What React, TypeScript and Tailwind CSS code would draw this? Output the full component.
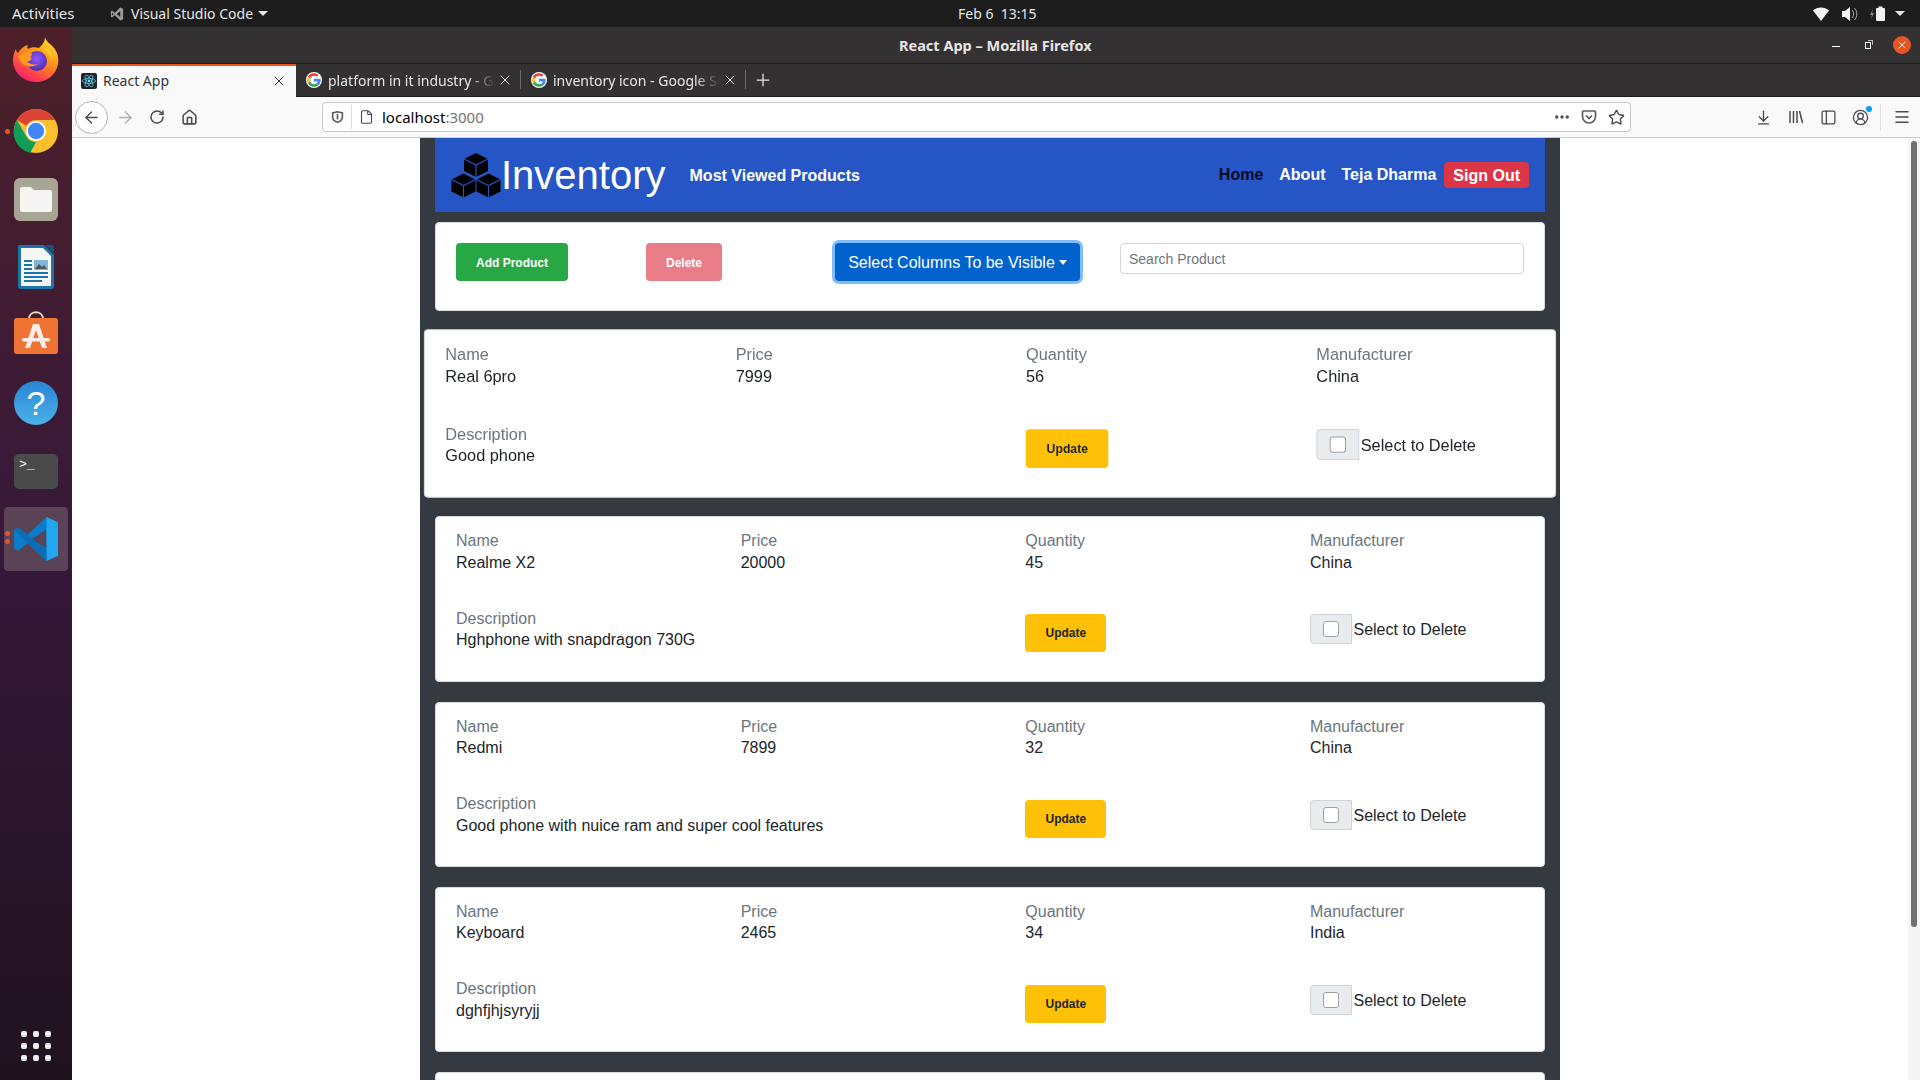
import React from 'react';
import { ArrowLeft, ArrowRight, RotateCw, House, Ellipsis, Star, ArrowDownToLine, PanelLeft, CircleUserRound, Menu, File, X, Plus } from 'lucide-react';

type Product = {
  name: string;
  price: string;
  quantity: string;
  manufacturer: string;
  description: string;
};

const products: Product[] = [
  { name: 'Real 6pro', price: '7999', quantity: '56', manufacturer: 'China', description: 'Good phone' },
  { name: 'Realme X2', price: '20000', quantity: '45', manufacturer: 'China', description: 'Hghphone with snapdragon 730G' },
  { name: 'Redmi', price: '7899', quantity: '32', manufacturer: 'China', description: 'Good phone with nuice ram and super cool features' },
  { name: 'Keyboard', price: '2465', quantity: '34', manufacturer: 'India', description: 'dghfjhjsyryjj' },
];

const GoogleIcon = () => (
  <svg viewBox="0 0 48 48" className="w-[16px] h-[16px] shrink-0 rounded-full bg-white p-[1px]">
    <path fill="#EA4335" d="M24 9.5c3.5 0 6.7 1.3 9.1 3.5l6.8-6.8C35.8 2.4 30.3 0 24 0 14.6 0 6.5 5.4 2.6 13.2l7.9 6.2C12.4 13.7 17.7 9.5 24 9.5z" />
    <path fill="#4285F4" d="M46.9 24.5c0-1.6-.1-3.100-.4-4.500H24v9h12.900c-.6 3-2.200 5.500-4.800 7.200l7.600 5.900c4.500-4.100 7.200-10.200 7.200-17.600z" />
    <path fill="#FBBC05" d="M10.500 28.600c-.5-1.400-.8-3-.8-4.600s.3-3.200.8-4.600l-7.900-6.200C.9 16.500 0 20.100 0 24s.9 7.500 2.600 10.800l7.900-6.200z" />
    <path fill="#34A853" d="M24 48c6.500 0 11.900-2.100 15.800-5.800l-7.600-5.900c-2.100 1.400-4.900 2.300-8.200 2.300-6.300 0-11.600-4.200-13.500-9.900l-7.900 6.200C6.500 42.600 14.600 48 24 48z" />
  </svg>
);

const ReactIcon = () => (
  <svg viewBox="0 0 16 16" className="w-[16px] h-[16px] shrink-0 rounded-[2px] bg-[#20232a]">
    <circle cx="8" cy="8" r="1.400" fill="#61dafb" />
    <g fill="none" stroke="#61dafb" strokeWidth="0.700">
      <ellipse cx="8" cy="8" rx="6.500" ry="2.600" />
      <ellipse cx="8" cy="8" rx="6.500" ry="2.600" transform="rotate(60 8 8)" />
      <ellipse cx="8" cy="8" rx="6.500" ry="2.600" transform="rotate(120 8 8)" />
    </g>
  </svg>
);

const VsCodeGlyph = ({ className }: { className?: string }) => (
  <svg viewBox="0 0 24 24" className={className} fill="currentColor">
    <path d="M17.500 1 8.200 9.800 3.500 6.200 1.500 7.200v9.600l2 1 4.700-3.600 9.300 8.800 5-2.200V3.200zM3.500 14.500v-5L6 12zM17.500 16.600 11.400 12l6.100-4.600z" />
  </svg>
);

const FirefoxIcon = () => (
  <svg viewBox="0 0 48 48" className="w-[48px] h-[48px]">
    <defs>
      <linearGradient id="ffa" x1="0.800" y1="0" x2="0.200" y2="1">
        <stop offset="0" stopColor="#ffe226" />
        <stop offset="0.450" stopColor="#ff8a1e" />
        <stop offset="0.800" stopColor="#ff3b50" />
        <stop offset="1" stopColor="#e31587" />
      </linearGradient>
      <radialGradient id="ffb" cx="0.500" cy="0.400" r="0.600">
        <stop offset="0" stopColor="#9059ff" />
        <stop offset="1" stopColor="#4a2bb0" />
      </radialGradient>
    </defs>
    <path fill="url(#ffa)" d="M33 1c1 5 6 7 9 11 4 5 5 11 4 16-2 11-11 18-22 18C11 46 1 36 1 24c0-4 1-8 3-11 0 2 1 3 2 4 2-4 6-7 10-8-1 2-1 3 0 4 3-2 7-2 11-1 3-3 6-6 6-11z" />
    <circle cx="25" cy="25" r="10" fill="url(#ffb)" />
    <path fill="#ff9a1f" d="M7 20c3-4 8-5 12-3 2 1 1 3-1 3 3 2 1 5-3 6 3 2 7 3 11 2-5 4-13 3-17-2-2-2-2-4-2-6z" />
    <path fill="#ffc928" d="M33 10c5 4 8 9 7 16-1-5-3-9-7-12z" />
  </svg>
);

const ChromeIcon = () => (
  <svg viewBox="0 0 48 48" className="w-[46px] h-[46px]">
    <circle cx="24" cy="24" r="23" fill="#fbc02d" />
    <path fill="#db4437" d="M24 1a23 23 0 0 1 20 11.500H24a11.500 11.500 0 0 0-10 6L4.100 12.500A23 23 0 0 1 24 1z" />
    <path fill="#0f9d58" d="M4.100 12.500 14 29.700a11.500 11.500 0 0 0 10 5.800L18 47a23 23 0 0 1-13.900-34.500z" />
    <circle cx="24" cy="24" r="10.500" fill="#fff" />
    <circle cx="24" cy="24" r="8.500" fill="#4285f4" />
  </svg>
);

const FilesIcon = () => (
  <div className="w-[44px] h-[43px] rounded-[6px] bg-[#a9a594] flex items-center justify-center">
    <svg viewBox="0 0 32 26" className="w-[32px] h-[26px]">
      <path fill="#f6f5f4" d="M0 3a2 2 0 0 1 2-2h9l3 3h16a2 2 0 0 1 2 2v18a2 2 0 0 1-2 2H2a2 2 0 0 1-2-2z" />
    </svg>
  </div>
);

const WriterIcon = () => (
  <svg viewBox="0 0 36 44" className="w-[36px] h-[44px]">
    <path fill="#1b75a8" d="M2 0h24l10 10v31a3 3 0 0 1-3 3H3a3 3 0 0 1-3-3V2a2 2 0 0 1 2-2z" />
    <path fill="#f6f6f6" d="M3 3h22l8 8v30H3z" />
    <path fill="#18537a" d="M27 0h7a2 2 0 0 1 2 2v7z" />
    <path fill="#1b75a8" d="M6 15h8v2H6zM6 19h8v2H6zM6 23h8v2H6zM6 27h24v2H6zM6 31h24v2H6zM6 35h18v2H6z" />
    <rect x="16" y="15" width="14" height="10" fill="#7fb6d6" />
    <path fill="#555" d="M17 24l4-5 3 3 2-2 3 4z" />
  </svg>
);

const StoreIcon = () => (
  <div className="relative w-[44px] h-[44px]">
    <svg viewBox="0 0 44 44" className="w-[44px] h-[44px]">
      <path fill="none" stroke="#e8d5b8" strokeWidth="2" d="M15 9c0-9 14-9 14 0" />
      <path fill="#ef7333" d="M3 8h38a3 3 0 0 1 3 3v30a3 3 0 0 1-3 3H3a3 3 0 0 1-3-3V11a3 3 0 0 1 3-3z" />
      <path fill="#f9efe8" d="M19 14h6l8 24h-5l-6-18-6 18h-5z" />
      <rect x="8" y="28" width="28" height="3.500" rx="1.700" fill="#f9efe8" />
    </svg>
  </div>
);

const HelpIcon = () => (
  <div className="w-[44px] h-[44px] rounded-full bg-gradient-to-b from-[#2a86d6] to-[#4bb0e8] flex items-center justify-center text-white text-[34px] leading-none">
    ?
  </div>
);

const TerminalIcon = () => (
  <div className="w-[44px] h-[35px] rounded-[5px] bg-[#4a4a4a] text-white text-[13px] leading-none pl-[5px] pt-[4px] font-['Liberation_Mono',monospace]">
    &gt;_
  </div>
);

const VsCodeIcon = () => (
  <svg viewBox="0 0 44 44" className="w-[46px] h-[46px]">
    <path fill="#0a7cc9" d="M32 1 14 18 5 11 1 13v18l4 2 9-7 18 17 11-5V6zM32 31 18 22 32 13z" />
    <path fill="#22a6f2" d="M32 1l11 5v32l-11 5z" />
    <path fill="#0a6db5" d="M1 13l4-2 27 21v11L5 17z" />
  </svg>
);

const Dot = () => <span className="block w-[5px] h-[5px] rounded-full bg-[#e95420]" />;

const Sidebar = () => (
  <aside className="w-[72px] shrink-0 h-full bg-gradient-to-b from-[#4d1f28] via-[#36183a] to-[#1f121d] flex flex-col items-center">
    <div className="h-[70px] pb-[4px] flex items-center justify-center"><FirefoxIcon /></div>
    <div className="relative h-[68px] w-full flex items-center justify-center">
      <span className="absolute left-[5px] top-[32px]"><Dot /></span>
      <ChromeIcon />
    </div>
    <div className="h-[68px] flex items-center justify-center"><FilesIcon /></div>
    <div className="h-[68px] flex items-center justify-center"><WriterIcon /></div>
    <div className="h-[68px] pb-[7px] flex items-center justify-center"><StoreIcon /></div>
    <div className="h-[68px] flex items-center justify-center"><HelpIcon /></div>
    <div className="h-[68px] flex items-center justify-center"><TerminalIcon /></div>
    <div className="relative mt-[2px] w-[64px] h-[64px] rounded-[4px] bg-[#5a4356] flex items-center justify-center">
      <span className="absolute left-[1px] top-[24px] flex flex-col gap-[3px]"><Dot /><Dot /></span>
      <VsCodeIcon />
    </div>
    <div className="mt-auto mb-[19px] grid grid-cols-3 gap-x-[6px] gap-y-[6px]">
      {Array.from({ length: 9 }).map((_, i) => (
        <span key={i} className="block w-[6px] h-[6px] rounded-[2px] bg-[#eeeeee]" />
      ))}
    </div>
  </aside>
);

const TopBar = () => (
  <div className="h-[27px] shrink-0 bg-[#1d1d1d] text-[#e6e6e6] text-[14px] flex items-center font-['Noto_Sans',sans-serif]">
    <span className="ml-[12px] w-[98px] text-[15px]">Activities</span>
    <VsCodeGlyph className="w-[14px] h-[14px] text-[#9a9a9a] mr-[7px]" />
    <span>Visual Studio Code</span>
    <span className="ml-[5px] border-t-[5px] border-x-[5px] border-x-transparent border-t-[#e6e6e6]" />
    <span className="ml-[690px] whitespace-pre">Feb 6  13:15</span>
    <div className="ml-auto flex items-center mr-[15px]">
      <svg viewBox="0 0 16 14" className="w-[16px] h-[14px]"><path fill="#f2f2f2" d="M0 3.500C4-.5 12-.5 16 3.500L8 14z" /></svg>
      <svg viewBox="0 0 16 14" className="w-[16px] h-[14px] ml-[13px]"><path fill="#f2f2f2" d="M0 4h3l5-4v14l-5-4H0z" /><path fill="none" stroke="#aaa" strokeWidth="1" d="M10 3c2 2 2 6 0 8M12.500 1c3 3 3 9 0 12" /></svg>
      <svg viewBox="0 0 16 16" className="w-[16px] h-[16px] ml-[12px]"><path fill="#888" d="M3 3 0 9h2l-1 4 3-6H2z" /><rect x="6" y="2" width="9" height="13" rx="1" fill="#f2f2f2" /><rect x="8.500" y="0.500" width="4" height="2" fill="#f2f2f2" /></svg>
      <span className="ml-[9px] border-t-[5px] border-x-[5px] border-x-transparent border-t-[#e6e6e6]" />
    </div>
  </div>
);

const TitleBar = () => (
  <div className="h-[37px] shrink-0 bg-[#333132] border-b border-[#1f1e1f] flex items-center text-[#e6e6e6] font-['Noto_Sans',sans-serif]">
    <span className="ml-[827px] pt-[1px] text-[14.500px] font-bold">React App – Mozilla Firefox</span>
    <div className="ml-auto flex items-center">
      <span className="block w-[8px] h-[1px] bg-white mt-[3px]" />
      <span className="relative ml-[25px] block w-[6px] h-[7px] border border-white">
        <span className="absolute -top-[3px] -right-[3px] w-[5px] h-[5px] border-t border-r border-[#bbbbbb]" />
      </span>
      <span className="ml-[22px] mr-[9px] w-[18px] h-[18px] rounded-full bg-[#e95420] flex items-center justify-center">
        <X className="w-[12px] h-[12px] text-white" strokeWidth={2} />
      </span>
    </div>
  </div>
);

const Tab = ({ title }: { title: string }) => (
  <div className="w-[225px] h-full flex items-center pl-[10px] text-[#e6e6e6] relative">
    <GoogleIcon />
    <span className="ml-[6px] w-[167px] overflow-hidden whitespace-nowrap text-[14px] [mask-image:linear-gradient(to_right,black_85%,transparent)]">{title}</span>
    <X className="ml-[2px] w-[16px] h-[16px] shrink-0" strokeWidth={1.500} />
    <span className="absolute right-0 top-[6px] bottom-[7px] w-px bg-[#6a6a6a]" />
  </div>
);

const TabBar = () => (
  <div className="h-[33px] shrink-0 bg-[#333132] border-b border-[#1f1e1f] flex items-stretch font-['Noto_Sans',sans-serif]">
    <div className="w-[224px] h-[33px] bg-[#f9f9fa] border-t-2 border-[#e95420] flex items-center pl-[9px] pb-[2px] text-[#333]">
      <ReactIcon />
      <span className="ml-[6px] text-[14px]">React App</span>
      <X className="ml-auto mr-[9px] w-[16px] h-[16px]" strokeWidth={1.500} />
    </div>
    <Tab title="platform in it industry - Google" />
    <Tab title="inventory icon - Google Search" />
    <div className="flex items-center ml-[7px]">
      <Plus className="w-[20px] h-[20px] text-[#e6e6e6]" strokeWidth={1.500} />
    </div>
  </div>
);

const Toolbar = () => (
  <div className="h-[41px] shrink-0 bg-[#f9f9fa] border-b border-[#cccccc] flex items-center text-[#4a4a4f] font-['Noto_Sans',sans-serif]">
    <span className="ml-[3px] w-[33px] h-[33px] rounded-full bg-white border border-[#b4b4b4] flex items-center justify-center">
      <ArrowLeft className="w-[19px] h-[19px]" strokeWidth={1.800} />
    </span>
    <ArrowRight className="ml-[8px] w-[19px] h-[19px] text-[#b1b1b3]" strokeWidth={1.800} />
    <RotateCw className="ml-[14px] w-[16px] h-[16px]" strokeWidth={2.200} />
    <House className="ml-[16px] w-[17px] h-[17px]" strokeWidth={2.200} />
    <div className="ml-[124px] w-[1309px] h-[30px] rounded-[4px] bg-white border border-[#c8c8c8] flex items-center">
      <svg viewBox="0 0 16 16" className="ml-[8px] w-[13px] h-[14px]" fill="none" stroke="#5b5b66" strokeWidth="2"><path d="M8 1.500 14 3v5c0 3.500-3 5.500-6 6.500C5 13.500 2 11.500 2 8V3z" /><path d="M8 4v7" /></svg>
      <span className="ml-[7px] w-px h-[24px] bg-[#dddddd]" />
      <File className="ml-[7px] w-[15px] h-[16px]" strokeWidth={1.800} />
      <span className="ml-[8px] text-[15px] text-black">localhost<span className="text-[#737373]">:3000</span></span>
      <Ellipsis className="ml-auto w-[18px] h-[18px]" strokeWidth={2.500} />
      <svg viewBox="0 0 16 16" className="ml-[10px] w-[16px] h-[16px]" fill="none" stroke="#5b5b66" strokeWidth="1.700"><path d="M2.500 2h11a1 1 0 0 1 1 1v4.500a6.500 6.500 0 0 1-13 0V3a1 1 0 0 1 1-1z" /><path d="M5 6.500 8 9.500l3-3" /></svg>
      <Star className="ml-[11px] mr-[5px] w-[17px] h-[17px]" strokeWidth={2} />
    </div>
    <ArrowDownToLine className="ml-[124px] w-[17px] h-[17px]" strokeWidth={1.800} />
    <svg viewBox="0 0 16 16" className="ml-[16px] w-[16px] h-[16px]" fill="none" stroke="#4a4a4f" strokeWidth="1.500"><path d="M2 2v12M5.500 2v12M9 2v12M11.500 2l3 12" /></svg>
    <PanelLeft className="ml-[16px] w-[17px] h-[17px]" strokeWidth={1.800} />
    <span className="relative ml-[15px]">
      <CircleUserRound className="w-[17px] h-[17px]" strokeWidth={1.800} />
      <span className="absolute -top-[3px] -right-[3px] w-[6px] h-[6px] rounded-full bg-[#0a9dff]" />
    </span>
    <span className="ml-[11px] w-px h-[27px] bg-[#dddddd]" />
    <Menu className="ml-[12px] w-[18px] h-[18px]" strokeWidth={2} />
  </div>
);

const Field = ({ label, value }: { label: string; value: string }) => (
  <div className="leading-[21.5px]">
    <div className="text-[#6c757d]">{label}</div>
    <div className="text-[#212529]">{value}</div>
  </div>
);

const ProductCard = ({ product, hovered }: { product: Product; hovered?: boolean }) => (
  <div
    className={`h-[165.33px] shrink-0 bg-white border border-[#d9d9d9] rounded-[4px] pl-[20px] pt-[13px] ${
      hovered ? 'scale-[1.02]' : ''
    }`}
  >
    <div className="grid grid-cols-[284.67px_284.67px_284.67px_1fr] gap-y-[34.5px]">
      <Field label="Name" value={product.name} />
      <Field label="Price" value={product.price} />
      <Field label="Quantity" value={product.quantity} />
      <Field label="Manufacturer" value={product.manufacturer} />
      <div className="col-span-2">
        <Field label="Description" value={product.description} />
      </div>
      <div className="pt-[6.5px]">
        <button className="w-[81px] h-[38px] rounded-[4px] bg-[#ffc107] text-[#212529] text-[12px] font-bold">Update</button>
      </div>
      <div className="pt-[6.5px] flex items-start">
        <span className="w-[42px] h-[30px] rounded-l-[4px] bg-[#e9ecef] border border-[#ced4da] flex items-center justify-center">
          <input type="checkbox" className="appearance-none w-[16px] h-[16px] rounded-[3px] bg-white border border-[#a0a0a0]" />
        </span>
        <span className="ml-[1.5px] leading-[31px] text-[#212529]">Select to Delete</span>
      </div>
    </div>
  </div>
);

const Navbar = () => (
  <nav className="h-[74px] shrink-0 bg-[#2655c5] flex items-center text-white">
    <svg viewBox="0 0 50 45" className="ml-[16px] w-[50px] h-[45px] shrink-0">
      {[
        [25, 12],
        [12.500, 32.500],
        [37.500, 32.500],
      ].map(([x, y], i) => (
        <g key={i} transform={`translate(${x} ${y})`}>
          <path d="M0-12 12-6V6L0 12-12 6V-6z" fill="#000" />
          <path d="M-12-6 0 0 12-6M0 0V12" fill="none" stroke="#2655c5" strokeWidth="1.200" />
        </g>
      ))}
    </svg>
    <span className="text-[40px] leading-none">Inventory</span>
    <span className="ml-[24px] pt-[1px] font-bold">Most Viewed Products</span>
    <div className="ml-auto flex items-center font-bold">
      <span className="text-[#050a24]">Home</span>
      <span className="ml-[16px]">About</span>
      <span className="ml-[16px]">Teja Dharma</span>
      <span className="ml-[8px] mr-[16px] h-[26px] rounded-[4px] bg-[#dc3545] px-[9px] leading-[27px]">Sign Out</span>
    </div>
  </nav>
);

const ActionsCard = () => (
  <div className="h-[89px] mt-[10px] shrink-0 bg-white border border-[#d9d9d9] rounded-[4px] pl-[20px] pt-[20px] grid grid-cols-[190px_189px_285px_1fr] items-start">
    <button className="w-[112px] h-[38px] pt-[1px] rounded-[4px] bg-[#28a745] text-white text-[12px] font-bold">Add Product</button>
    <button className="w-[76px] h-[38px] pt-[1px] rounded-[4px] bg-[#e97d88] text-white text-[12px] font-bold">Delete</button>
    <button className="w-[245px] h-[38px] pt-[1px] rounded-[4px] bg-[#0062cc] text-white ring-[3px] ring-[#80bdff] flex items-center justify-center gap-[4px]">
      Select Columns To be Visible
      <span className="border-t-[5px] border-x-[4px] border-x-transparent border-t-white" />
    </button>
    <input
      placeholder="Search Product"
      className="w-[404px] h-[31px] rounded-[4px] border border-[#ced4da] px-[8px] text-[14px] placeholder:text-[#6c757d] outline-none"
    />
  </div>
);

export default function App() {
  return (
    <div className="w-[1920px] h-[1080px] overflow-hidden flex flex-col bg-white font-['Liberation_Sans',Arial,sans-serif] text-[16px]">
      <TopBar />
      <div className="flex-1 min-h-0 flex">
        <Sidebar />
        <div className="flex-1 min-w-0 flex flex-col">
          <TitleBar />
          <TabBar />
          <Toolbar />
          <div className="flex-1 min-h-0 flex">
            <main className="flex-1 min-w-0 h-full overflow-hidden">
              <div className="mx-auto w-[1140px] h-full bg-[#343a40] px-[15px] flex flex-col">
                <Navbar />
                <ActionsCard />
                <div className="mt-[20px] flex flex-col gap-[20px]">
                  {products.map((p, i) => (
                    <ProductCard key={p.name} product={p} hovered={i === 0} />
                  ))}
                  <div className="h-[165.33px] shrink-0 bg-white border border-[#d9d9d9] rounded-[4px]" />
                </div>
              </div>
            </main>
            <div className="w-[12px] shrink-0 h-full bg-[#f5f5f5] pl-[3px] pt-[3px]">
              <div className="w-[6px] h-[786px] rounded-full bg-[#707070]" />
            </div>
          </div>
        </div>
      </div>
    </div>
  );
}
